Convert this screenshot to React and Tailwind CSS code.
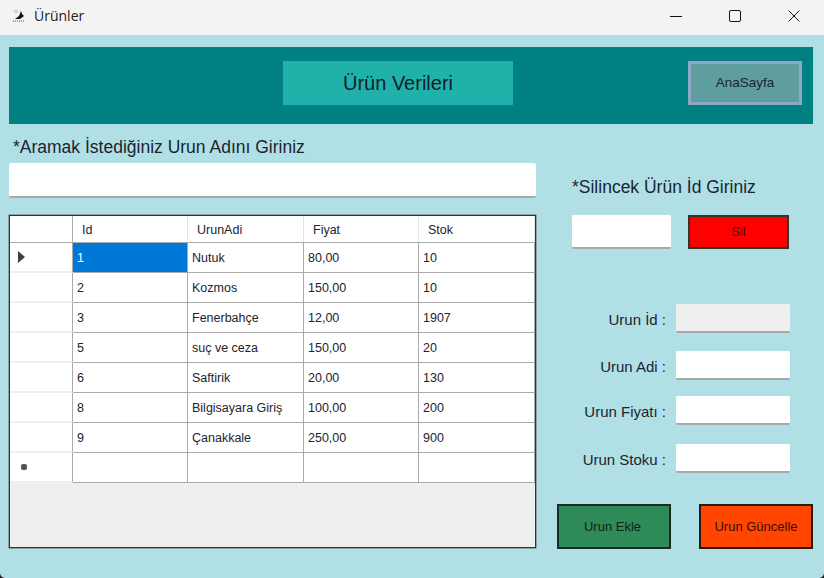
import React from "react";

const rows = [
  ["1", "Nutuk", "80,00", "10"],
  ["2", "Kozmos", "150,00", "10"],
  ["3", "Fenerbahçe", "12,00", "1907"],
  ["5", "suç ve ceza", "150,00", "20"],
  ["6", "Saftirik", "20,00", "130"],
  ["8", "Bilgisayara Giriş", "100,00", "200"],
  ["9", "Çanakkale", "250,00", "900"],
  ["", "", "", ""],
];
const cols = ["w-[115px]", "w-[116px]", "w-[115px]", "w-[116px]"];
const heads = [["Id", "pl-[9px]"], ["UrunAdi", "pl-[9px]"], ["Fiyat", "pl-[9px]"], ["Stok", "pl-[9px]"]];

function Input({ className = "" }) {
  return <div className={"bg-white border-b-2 border-[#a8a8a8] rounded-[2px] " + className} />;
}

function FormRow({ label, disabled, className }) {
  return (
    <div className={"flex items-center justify-end pr-[34px] " + className}>
      <span className="mr-[10px] pt-[3px] text-[15px] leading-[18px] text-[#1c2430]">{label}</span>
      <div className={"w-[114px] h-[29px] border-b-2 border-[#a8a8a8] rounded-[2px] " + (disabled ? "bg-[#efefef]" : "bg-white")} />
    </div>
  );
}

export default function App() {
  return (
    <div className="w-[824px] h-[578px] overflow-hidden bg-[#1a1a1a]">
      <div className="w-full h-full overflow-hidden rounded-b-[5px] flex flex-col bg-[#b0e0e6] font-['Liberation_Sans',Arial,sans-serif]">
        <div className="h-[35px] shrink-0 bg-[#f3f3f3] flex items-center pb-[5px]">
          <svg width="14" height="14" viewBox="0 0 14 14" className="ml-[12px]">
            <path d="M3 11 L7 8 L9 3 L10 6 L12 8 L8 11 Z" fill="#111" />
            <path d="M1 13 H13" stroke="#555" strokeWidth="1" strokeDasharray="1 1" />
            <path d="M3 2 V6 M5 2 V5" stroke="#888" strokeWidth="1" strokeDasharray="1 1" />
          </svg>
          <span className="ml-[8px] text-[14px] text-[#222] font-['Open_Sans',sans-serif]">Ürünler</span>
          <div className="ml-auto mt-[2px] flex items-center">
            <svg width="12" height="12" viewBox="0 0 12 12" className="mr-[47px]"><path d="M0 6.5H12" stroke="#111" strokeWidth="1" /></svg>
            <svg width="12" height="12" viewBox="0 0 12 12" className="mr-[47px]"><rect x="0.5" y="0.5" width="11" height="11" rx="1.5" fill="none" stroke="#111" strokeWidth="1" /></svg>
            <svg width="12" height="12" viewBox="0 0 12 12" className="mr-[24px]"><path d="M0.5 0.5L11.5 11.5M11.5 0.5L0.5 11.5" stroke="#111" strokeWidth="1" /></svg>
          </div>
        </div>

        <div className="mt-[12px] ml-[9px] w-[804px] h-[77px] shrink-0 bg-[#008080] flex items-start pt-[14px]">
          <div className="ml-[274px] w-[230px] h-[44px] bg-[#20b2aa] flex items-center justify-center text-[20px] text-[#10202a]">Ürün Verileri</div>
          <button className="ml-[175px] w-[114px] h-[44px] bg-[#5f9ea0] border-[3px] border-[#8fa8c8] pt-[1px] text-[13.5px] text-[#1c2430]">AnaSayfa</button>
        </div>

        <div className="flex flex-1">
          <div className="w-[557px] shrink-0 pl-[9px]">
            <div className="mt-[13px] pl-[4px] text-[17.5px] leading-[20px] text-[#1c2430]">*Aramak İstediğiniz Urun Adını Giriniz</div>
            <Input className="mt-[6px] w-[527px] h-[35px]" />
            <div className="mt-[17px] w-[527px] h-[333px] border border-[#333] shadow-[0_0_0_0.5px_#666] bg-[#efefef]">
              <div className="flex h-[27px] bg-white border-b border-[#aaaaaa]">
                <div className="w-[63px] shrink-0 border-r border-[#aaaaaa]" />
                {heads.map(([h, p], i) => (
                  <div key={h} className={cols[i] + " " + p + " shrink-0 flex items-center pt-[2px] text-[12.5px] text-[#1c2430] border-r border-[#e4e4e4]"}>{h}</div>
                ))}
              </div>
              {rows.map((r, i) => (
                <div key={i} className="flex h-[30px] border-b border-[#aaaaaa]">
                  <div className="w-[63px] shrink-0 bg-white border-r border-[#aaaaaa] flex items-center border-b-2 border-b-[#efefef] -mb-px">
                    {i === 0 && <svg width="7" height="12" viewBox="0 0 7 12" className="ml-[8px]"><path d="M0 0L7 6L0 12Z" fill="#404040" /></svg>}
                    {i === 7 && <span className="ml-[11px] w-[6px] h-[6px] rounded-[2px] bg-[#555]" />}
                  </div>
                  {r.map((c, j) => (
                    <div key={j} className={cols[j] + " shrink-0 flex items-center pl-[4px] pt-[2px] text-[12.5px] border-r border-[#aaaaaa] " + (i === 0 && j === 0 ? "bg-[#0078d7] text-white" : "bg-white text-[#1c2430]")}>{c}</div>
                  ))}
                </div>
              ))}
            </div>
          </div>

          <div className="flex-1">
            <div className="mt-[53px] ml-[15px] text-[17.5px] leading-[20px] text-[#1c2430]">*Silincek Ürün İd Giriniz</div>
            <div className="mt-[18px] ml-[15px] flex items-start">
              <Input className="w-[99px] h-[34px]" />
              <button className="ml-[17px] w-[101px] h-[34px] bg-[#ff0000] border-2 border-[#333] text-[13px] text-[#4a0a0a]">Sil</button>
            </div>
            <FormRow label="Urun İd :" disabled className="mt-[55px]" />
            <FormRow label="Urun Adi :" className="mt-[18px]" />
            <FormRow label="Urun Fiyatı :" className="mt-[16px]" />
            <FormRow label="Urun Stoku :" className="mt-[19px]" />
            <div className="mt-[31px] flex">
              <button className="w-[114px] h-[45px] bg-[#2e8b57] border-2 border-[#1c2a24] pr-[3px] text-[13px] text-[#0c2418]">Urun Ekle</button>
              <button className="ml-[28px] w-[114px] h-[45px] bg-[#ff4500] border-2 border-[#2a1a14] text-[13px] text-[#3c0d00]">Urun Güncelle</button>
            </div>
          </div>
        </div>
      </div>
    </div>
  );
}
